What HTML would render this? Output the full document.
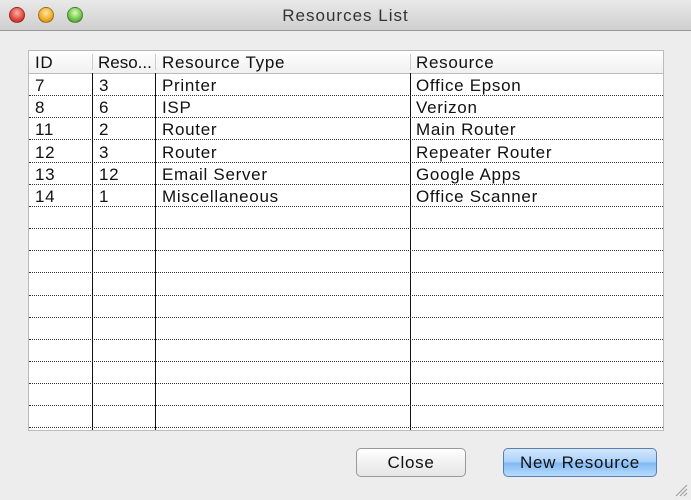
<!DOCTYPE html><html><head><style>
body{margin:0;width:691px;height:500px;background:#ededed;font-family:"Liberation Sans",sans-serif;position:relative;overflow:hidden;letter-spacing:0.7px}
.tb{position:absolute;left:0;top:0;width:691px;height:30px;background:linear-gradient(#e9e9e9,#cfcfcf);border-bottom:1px solid #9a9a9a;text-align:center;font-size:17px;line-height:32px;color:#333;letter-spacing:1px}
.dot{position:absolute;top:7px;width:14px;height:14px;border-radius:50%;border:1px solid rgba(0,0,0,.3)}
.tbl{position:absolute;left:28px;top:50px;width:634px;height:379px;background:#fff;border:1px solid #bbb;overflow:hidden}
.hd{position:absolute;left:0;top:0;width:634px;height:22px;background:linear-gradient(#fff,#f0f0f0);border-bottom:1px solid #bbb}
.c{position:absolute;font-size:17px;color:#111;white-space:nowrap}
.vl{position:absolute;top:22px;width:1px;height:360px;background:#111}
.hl{position:absolute;left:0;width:634px;height:0;border-top:1px dotted #333}
.btn{position:absolute;top:448px;height:27px;border-radius:5px;border:1px solid #999;font-size:17px;text-align:center;line-height:27px;color:#111}
</style></head><body>
<div class="tb">Resources List
<div class="dot" style="left:9px;background:radial-gradient(circle at 50% 35%,#ffb0a8,#e0443a 60%,#a8231c)"></div>
<div class="dot" style="left:38px;background:radial-gradient(circle at 50% 35%,#ffe6a0,#f0a92a 60%,#b5760e)"></div>
<div class="dot" style="left:67px;background:radial-gradient(circle at 50% 35%,#d8ffb0,#6cc24a 60%,#3c8a1e)"></div>
</div>
<div class="tbl">
<div class="hd">
<div class="c" style="left:6px;top:2px">ID</div>
<div class="c" style="left:69px;top:2px;letter-spacing:0">Reso...</div>
<div class="c" style="left:133px;top:2px">Resource Type</div>
<div class="c" style="left:387px;top:2px">Resource</div>
<div style="position:absolute;left:63px;top:3px;width:1px;height:16px;background:#ccc"></div>
<div style="position:absolute;left:126px;top:3px;width:1px;height:16px;background:#ccc"></div>
<div style="position:absolute;left:381px;top:3px;width:1px;height:16px;background:#ccc"></div>
</div>
<div class="vl" style="left:63px"></div><div class="vl" style="left:126px"></div><div class="vl" style="left:381px"></div>
<div class="hl" style="top:44px"></div><div class="hl" style="top:66px"></div><div class="hl" style="top:88px"></div><div class="hl" style="top:111px"></div><div class="hl" style="top:133px"></div><div class="hl" style="top:155px"></div><div class="hl" style="top:177px"></div><div class="hl" style="top:199px"></div><div class="hl" style="top:221px"></div><div class="hl" style="top:244px"></div><div class="hl" style="top:266px"></div><div class="hl" style="top:288px"></div><div class="hl" style="top:310px"></div><div class="hl" style="top:332px"></div><div class="hl" style="top:354px"></div><div class="hl" style="top:376px"></div>
<div class="c" style="left:6px;top:25px">7</div><div class="c" style="left:70px;top:25px">3</div><div class="c" style="left:133px;top:25px">Printer</div><div class="c" style="left:387px;top:25px">Office Epson</div>
<div class="c" style="left:6px;top:47px">8</div><div class="c" style="left:70px;top:47px">6</div><div class="c" style="left:133px;top:47px">ISP</div><div class="c" style="left:387px;top:47px">Verizon</div>
<div class="c" style="left:6px;top:69px">11</div><div class="c" style="left:70px;top:69px">2</div><div class="c" style="left:133px;top:69px">Router</div><div class="c" style="left:387px;top:69px">Main Router</div>
<div class="c" style="left:6px;top:92px">12</div><div class="c" style="left:70px;top:92px">3</div><div class="c" style="left:133px;top:92px">Router</div><div class="c" style="left:387px;top:92px">Repeater Router</div>
<div class="c" style="left:6px;top:114px">13</div><div class="c" style="left:70px;top:114px">12</div><div class="c" style="left:133px;top:114px">Email Server</div><div class="c" style="left:387px;top:114px">Google Apps</div>
<div class="c" style="left:6px;top:136px">14</div><div class="c" style="left:70px;top:136px">1</div><div class="c" style="left:133px;top:136px">Miscellaneous</div><div class="c" style="left:387px;top:136px">Office Scanner</div>
</div>
<div class="btn" style="left:356px;width:108px;background:linear-gradient(#fff,#f1f1f1 50%,#e6e6e6)">Close</div>
<div class="btn" style="left:503px;width:152px;border-color:#5b7fb5;background:linear-gradient(#d4e8fd,#a8d0fa 50%,#7fb8f4 51%,#b7dcfc)">New Resource</div>
<svg style="position:absolute;left:674px;top:483px" width="14" height="14"><path d="M2 13L13 2M6 13L13 6M10 13L13 10" stroke="#999" stroke-width="1"/></svg>
</body></html>
